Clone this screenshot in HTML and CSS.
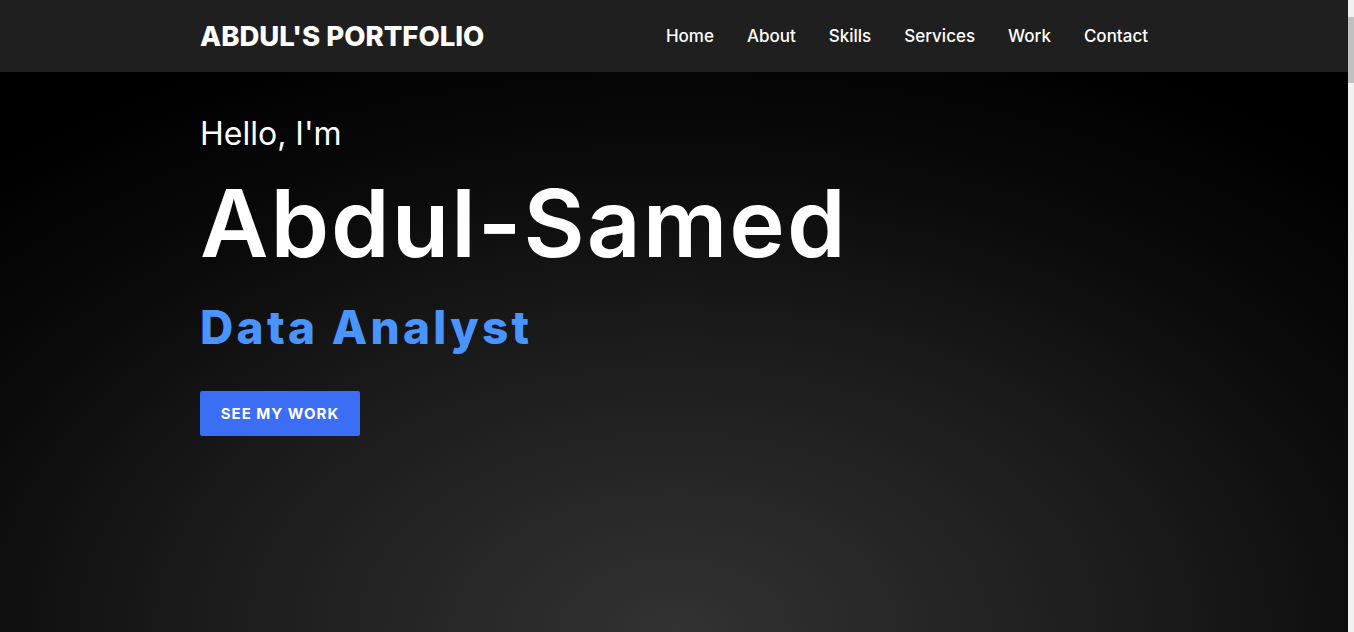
FILE: index.html
```html
<!DOCTYPE html>
<html lang="en">
<head>
<meta charset="utf-8">
<title>Abdul's Portfolio</title>
<link rel="stylesheet" href="styles.css">
</head>
<body>
<header class="navbar">
  <div class="container nav-inner">
    <a class="logo" href="#">ABDUL'S PORTFOLIO</a>
    <nav class="nav-links">
      <a href="#home">Home</a>
      <a href="#about">About</a>
      <a href="#skills">Skills</a>
      <a href="#services">Services</a>
      <a href="#work">Work</a>
      <a href="#contact">Contact</a>
    </nav>
  </div>
</header>
<main>
  <section class="hero" id="home">
    <div class="container hero-inner">
      <p class="hello">Hello, I'm</p>
      <h1 class="name">Abdul-Samed</h1>
      <h2 class="role">Data Analyst</h2>
      <a class="btn" href="#work">SEE MY WORK</a>
    </div>
  </section>
</main>
<div class="scrollbar" aria-hidden="true"><span class="scroll-thumb"></span></div>
</body>
</html>
```

FILE: styles.css
```css
* { box-sizing: border-box; }

html {
  background: #f1f1f1;
}

body {
  margin: 0 6px 0 0;
  background: #000;
  color: #fff;
  font-family: Inter, "Open Sans", "Liberation Sans", sans-serif;
  overflow: hidden;
}

a { color: inherit; text-decoration: none; }

.container {
  width: 948px;
  margin: 0 auto;
}

.navbar {
  position: fixed;
  top: 0;
  left: 0;
  right: 6px;
  height: 72px;
  background: #1f1f1f;
  z-index: 10;
}

.nav-inner {
  height: 100%;
  display: flex;
  align-items: center;
  justify-content: space-between;
}

.logo {
  font-size: 27.5px;
  font-weight: 800;
  line-height: 1;
  margin-top: 1px;
}

.nav-links {
  display: flex;
  gap: 33px;
}

.nav-links a {
  font-size: 17px;
  font-weight: 500;
}

.hero {
  height: 100vh;
  padding-top: 115px;
  background: radial-gradient(ellipse 75% 100% at 50% 100%, #323232 0%, #1c1c1c 45%, #0a0a0a 75%, #000 100%);
}

.hero-inner {
  display: flex;
  flex-direction: column;
  align-items: flex-start;
}

.hello {
  margin: 0;
  font-size: 32px;
  font-weight: 400;
  line-height: 1.2;
}

.name {
  margin: 14px 0 0;
  font-size: 94px;
  font-weight: 600;
  letter-spacing: 2px;
  line-height: 1.2;
}

.role {
  margin: 20px 0 0;
  font-size: 46px;
  font-weight: 800;
  letter-spacing: 3.3px;
  line-height: 1.2;
  color: #4a94ff;
}

.btn {
  margin-top: 36px;
  width: 160px;
  height: 45px;
  display: flex;
  align-items: center;
  justify-content: center;
  background: #3b6ef5;
  border-radius: 2px;
  font-size: 15px;
  font-weight: 700;
  letter-spacing: 1px;
}

.scrollbar {
  position: fixed;
  top: 0;
  right: 0;
  width: 6px;
  height: 100vh;
  background: #f1f1f1;
}

.scroll-thumb {
  position: absolute;
  top: 17px;
  left: 0;
  width: 6px;
  height: 66px;
  background: #c1c1c1;
}
```
